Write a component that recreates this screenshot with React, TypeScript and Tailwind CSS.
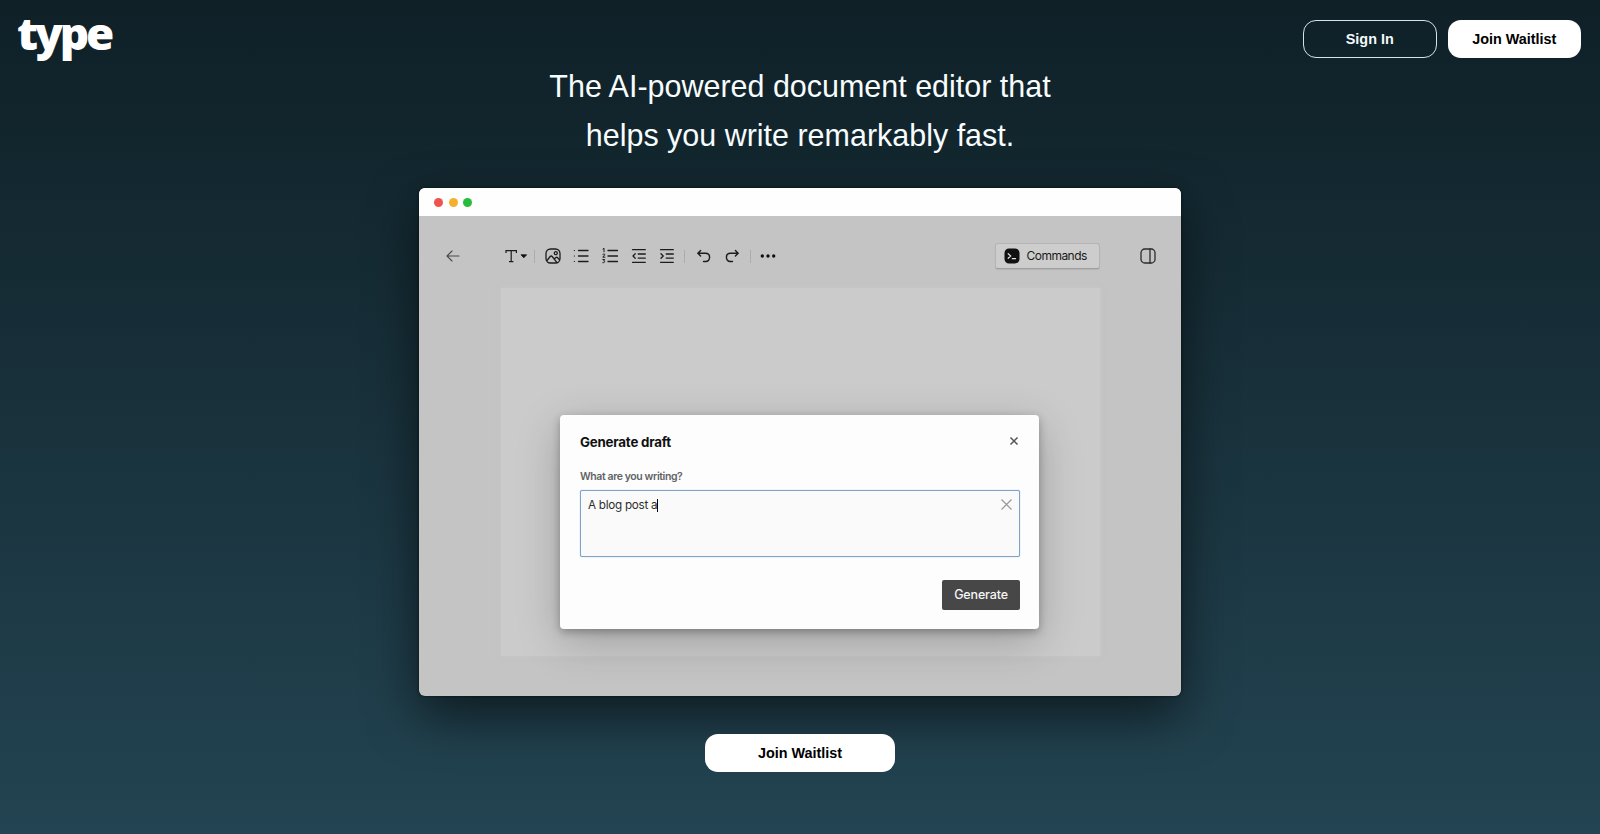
import type { ReactNode } from "react";

function Icon({ children, size = 16, className = "" }: { children: ReactNode; size?: number; className?: string }) {
  return (
    <svg
      width={size}
      height={size}
      viewBox="0 0 16 16"
      fill="none"
      stroke="currentColor"
      strokeWidth="1.3"
      strokeLinecap="round"
      strokeLinejoin="round"
      className={`shrink-0 ${className}`}
    >
      {children}
    </svg>
  );
}

function Slot({ children }: { children: ReactNode }) {
  return <div className="flex w-[28.6px] shrink-0 items-center justify-center">{children}</div>;
}

function Separator() {
  return <div className="h-[13px] w-px shrink-0 bg-[#acacac]" />;
}

function Toolbar() {
  return (
    <div className="flex h-[80px] items-center text-[#1c1c1c]">
      <Icon className="ml-[26px] text-[#4b4b4b]">
        <path d="M14 8H2M7 3L2 8l5 5" strokeWidth="1.1" />
      </Icon>
      <Icon className="ml-[42px]">
        <path d="M3 5V2.6h10.400V5M8.200 2.600v11M6 13.600h4.400" strokeWidth="1.2" strokeLinejoin="miter" strokeLinecap="butt" />
      </Icon>
      <svg width="8" height="5" viewBox="0 0 8 5" className="ml-px mt-px shrink-0">
        <path d="M1 .8h5.600L3.800 3.800z" fill="#111" stroke="#111" strokeWidth=".8" strokeLinejoin="round" />
      </svg>
      <div className="ml-[6px] flex items-center">
        <Separator />
        <div className="ml-[3.500px] flex">
          <Slot>
            <Icon>
              <rect x="1" y="1" width="14" height="14" rx="4.500" />
              <circle cx="10.800" cy="5.200" r="1.500" />
              <path d="M2 12.500l3.200-4c.6-.7 1.400-.7 2 0l4.600 5.800M9.300 11l1.600-1.400c.6-.5 1.200-.4 1.700.1l1.900 2" />
            </Icon>
          </Slot>
          <Slot>
            <Icon>
              <path d="M5.500 2.500h9.500M5.500 8h9.500M5.500 13.500h9.500" />
              <path d="M1.300 2.500h.2M1.300 8h.2M1.300 13.500h.2" strokeWidth="1.100" />
            </Icon>
          </Slot>
          <Slot>
            <svg width="16" height="18" viewBox="0 0 16 18" fill="none" stroke="currentColor" strokeLinecap="round">
              <path d="M6 3.500h9.500M6 9h9.500M6 14.500h9.500" strokeWidth="1.300" />
              <path d="M1 2l1-.8v3.600M.8 7.500c.5-1 2.200-.7 1.900.4L.8 10.200h2.100M.8 12.500h1.900L1.700 14c1.600 0 1.500 2-.9 1.700" strokeWidth="1" />
            </svg>
          </Slot>
          <Slot>
            <Icon>
              <path d="M1.500 1.700h12.800M7.200 6h7.100M7.200 10.100h7.100M1.500 14.300h12.800M4.200 5.800L2 8l2.200 2.200" />
            </Icon>
          </Slot>
          <Slot>
            <Icon>
              <path d="M1.500 1.700h12.800M7.200 6h7.100M7.200 10.100h7.100M1.500 14.300h12.800M2 5.800L4.200 8 2 10.200" />
            </Icon>
          </Slot>
        </div>
        <div className="ml-[3px]">
          <Separator />
        </div>
        <div className="ml-[4px] flex">
          <Slot>
            <Icon>
              <path d="M4.600 2.500L1.800 5.200l2.800 2.700M2 5.200h7.700c5.200 0 5.200 8.300 0 8.300H7.500" strokeWidth="1.400" />
            </Icon>
          </Slot>
          <Slot>
            <Icon>
              <path d="M11.400 2.500l2.800 2.700-2.800 2.700M14 5.200H6.300c-5.200 0-5.200 8.300 0 8.300h2.200" strokeWidth="1.400" />
            </Icon>
          </Slot>
        </div>
        <div className="ml-[3px]">
          <Separator />
        </div>
        <div className="ml-[3px]">
          <Slot>
            <svg width="16" height="4" viewBox="0 0 16 4" fill="#111">
              <circle cx="2.300" cy="2" r="1.700" />
              <circle cx="8" cy="2" r="1.700" />
              <circle cx="13.700" cy="2" r="1.700" />
            </svg>
          </Slot>
        </div>
      </div>
      <div className="ml-auto mr-[40px] flex h-[26px] w-[105px] items-center rounded-[3px] border border-[#b4b4b4] border-b-[#9f9f9f] bg-[#cdcdcd] pl-[8px] shadow-[0_1px_1px_rgba(0,0,0,.08)]">
        <svg width="16" height="16" viewBox="0 0 16 16" fill="none" className="shrink-0">
          <rect x=".5" y=".5" width="15" height="15" rx="4.500" fill="#111" />
          <path d="M4.200 5.700l2.500 2.300-2.500 2.300M8.300 10.700h3.200" stroke="#e5e5e5" strokeWidth="1.200" strokeLinecap="round" />
        </svg>
        <span className="ml-[6.500px] text-[12px] leading-none tracking-[-0.520px] text-[#1a1a1a]">Commands</span>
      </div>
      <Icon className="mr-[25px] text-[#2b2b2b]">
        <rect x="1" y="1" width="14" height="14" rx="3.800" />
        <path d="M10 1v14" />
      </Icon>
    </div>
  );
}

function GenerateDialog() {
  return (
    <div className="ml-[59px] mt-[127px] h-[214px] w-[479px] rounded-[4px] bg-[#fdfdfd] pl-[20px] pr-[19px] shadow-[0_3px_8px_rgba(0,0,0,.28),0_12px_44px_rgba(0,0,0,.22)]">
      <div className="flex h-[55px] items-center justify-between">
        <h2 className="mt-px text-[13.300px] font-bold tracking-[-0.200px] text-[#101010]">Generate draft</h2>
        <svg width="10" height="10" viewBox="0 0 10 10" className="mb-[3px] mr-[1px]">
          <path d="M1.500 1.500l7 7m0-7l-7 7" stroke="#555" strokeWidth="1.500" />
        </svg>
      </div>
      <label className="flex h-[13px] items-center text-[10.500px] font-semibold tracking-[-0.400px] text-[#606366]">What are you writing?</label>
      <div className="mt-[7px] flex h-[67px] items-start justify-between rounded-[2px] border-[1.500px] border-[#7da3cb] bg-[#fafafa] pl-[7px] pr-[6px] pt-[7px] shadow-[0_0_1px_#7da3cb]">
        <div className="flex items-center text-[11.700px] leading-[14px] tracking-[-0.270px] text-[#2e2e2e]">
          <span>A blog post a</span>
          <span className="h-[13px] w-px bg-black" />
        </div>
        <svg width="13" height="13" viewBox="0 0 13 13">
          <path d="M1.500 1.500l10 10m0-10l-10 10" stroke="#999" strokeWidth="1.200" />
        </svg>
      </div>
      <div className="mt-[23px] flex justify-end">
        <button className="h-[30px] w-[78px] rounded-[2px] bg-[#474747] text-[12.500px] font-medium tracking-[-0.150px] text-[#f5f5f5]">Generate</button>
      </div>
    </div>
  );
}

function EditorWindow() {
  return (
    <div className="mt-[29px] h-[508px] w-[762px] overflow-hidden rounded-[6px] bg-[#c4c4c4] font-['Inter',sans-serif] shadow-[0_0_3px_rgba(0,0,0,.6),0_20px_50px_rgba(0,0,0,.55)]">
      <div className="flex h-[28px] items-center gap-[5.500px] bg-[#fefefe] pl-[15px]">
        <span className="size-[9px] rounded-full bg-[#ee544c]" />
        <span className="size-[9px] rounded-full bg-[#f5b02e]" />
        <span className="size-[9px] rounded-full bg-[#27bd3b]" />
      </div>
      <Toolbar />
      <div className="ml-[82px] mt-[-8px] h-[368px] w-[599px] bg-[#cbcbcb] shadow-[0_0_4px_rgba(203,203,203,.6)]">
        <div className="flex">
          <GenerateDialog />
        </div>
      </div>
    </div>
  );
}

export default function App() {
  return (
    <div className="flex h-[834px] flex-col overflow-hidden bg-linear-to-b from-[#0f2027] to-[#234452] font-['Liberation_Sans',sans-serif]">
      <header className="flex h-[61px] items-start justify-between px-[19px] pt-[20px]">
        <a className="-ml-[2px] -mt-[13px] origin-left scale-x-[1.04] font-['Open_Sans',sans-serif] text-[44px] font-extrabold leading-[53px] tracking-[-3px] text-white">
          type
        </a>
        <nav className="flex gap-[11px] text-[14.400px] font-bold">
          <button className="h-[38px] w-[133.500px] rounded-[13px] border border-[#d5e3e8] pt-px text-[#f3f9fb]">Sign In</button>
          <button className="h-[38px] w-[133.500px] rounded-[13px] bg-white pt-[2px] text-black">Join Waitlist</button>
        </nav>
      </header>
      <main className="flex flex-col items-center">
        <h1 className="w-[560px] pt-px text-center text-[30.480px] leading-[48.600px] text-[#f7fcfd]">
          The AI-powered document editor that helps you write remarkably fast.
        </h1>
        <EditorWindow />
        <button className="mt-[38px] h-[38px] w-[190px] rounded-[13px] bg-white pt-[2px] text-[14.400px] font-bold text-black">
          Join Waitlist
        </button>
      </main>
    </div>
  );
}
